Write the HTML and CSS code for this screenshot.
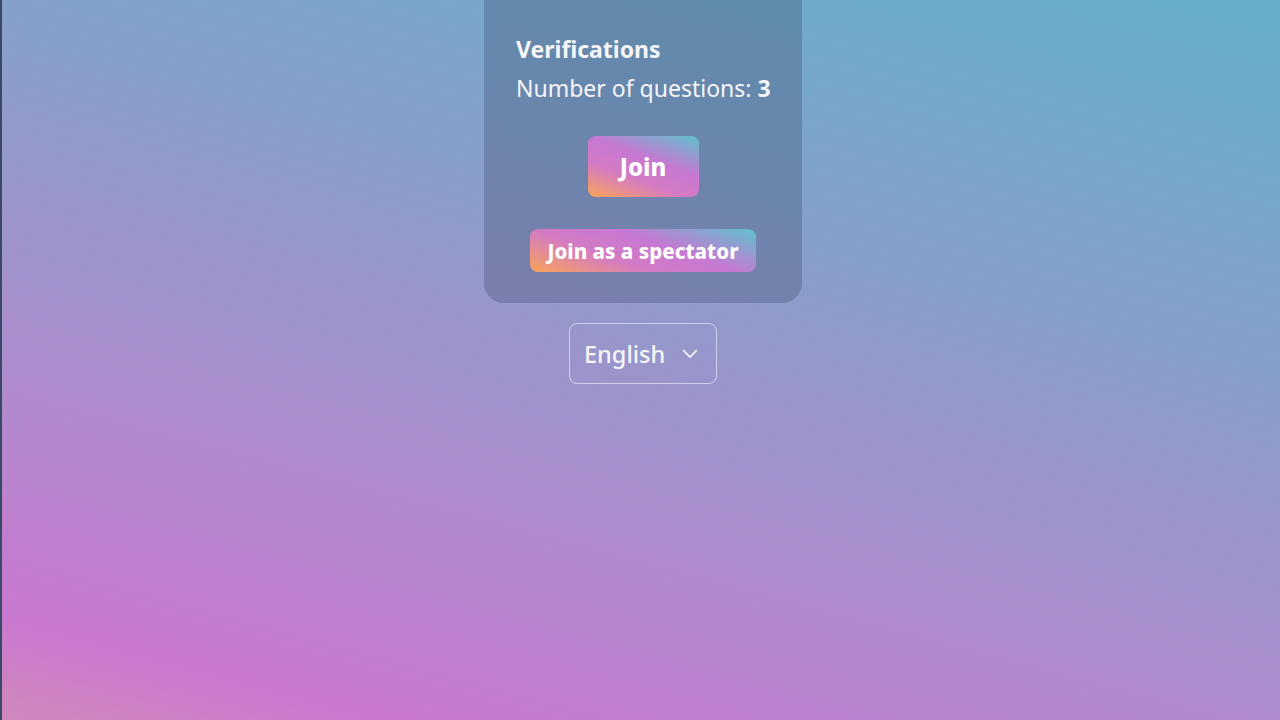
FILE: index.html
```html
<!DOCTYPE html>
<html lang="en">
<head>
<meta charset="utf-8">
<title>Quiz</title>
<link rel="stylesheet" href="styles.css">
</head>
<body>
<div class="page">
  <div class="card">
    <div class="info">
      <div class="title">Verifications</div>
      <div class="count">Number of questions: <b>3</b></div>
    </div>
    <button class="btn btn-join">Join</button>
    <button class="btn btn-spectator">Join as a spectator</button>
  </div>
  <div class="lang">
    <span>English</span>
    <svg class="chev" width="16" height="10" viewBox="0 0 16 10"><path d="M1.5 1.5 L8 8 L14.5 1.5" fill="none" stroke="#fff" stroke-width="1.6" stroke-linecap="round" stroke-linejoin="round"/></svg>
  </div>
</div>
</body>
</html>
```
FILE: styles.css
```css
html, body {
  margin: 0;
  height: 100%;
}
body {
  background: linear-gradient(195deg, #64b0c8 0%, #84a0ca 33%, #ac8ccc 66%, #c878d0 90%, #d088bc 100%);
  font-family: "Noto Sans", "Open Sans", sans-serif;
  color: #f6f6fa;
  border-left: 2px solid #3a4a66;
  box-sizing: border-box;
  overflow: hidden;
}
.page {
  display: flex;
  flex-direction: column;
  align-items: center;
  padding-left: 4px;
}
.card {
  width: 318px;
  box-sizing: border-box;
  background: rgba(36, 48, 80, 0.24);
  border-radius: 0 0 20px 20px;
  padding: 30px 32px 31px;
  display: flex;
  flex-direction: column;
  align-items: center;
}
.info {
  align-self: stretch;
  white-space: nowrap;
}
.title {
  font-size: 23px;
  font-weight: 700;
  line-height: 38px;
}
.count {
  font-size: 23px;
  font-weight: 400;
  line-height: 40px;
}
.count b {
  font-weight: 700;
}
.btn {
  border: none;
  border-radius: 8px;
  color: #fff;
  font-family: inherit;
  font-weight: 800;
  background: linear-gradient(20deg, #f8a458 0%, #d47ac4 35%, #c678d2 60%, #5cc2cc 100%);
  cursor: pointer;
  padding: 0;
}
.btn-join {
  margin-top: 28px;
  width: 111px;
  height: 61px;
  font-size: 24px;
}
.btn-spectator {
  margin-top: 32px;
  width: 226px;
  height: 43px;
  font-size: 20.5px;
}
.lang {
  margin-top: 20px;
  width: 148px;
  height: 61px;
  box-sizing: border-box;
  border: 1px solid rgba(255, 255, 255, 0.55);
  border-radius: 8px;
  display: flex;
  align-items: center;
  justify-content: space-between;
  padding: 0 18px 0 14px;
  font-size: 23.5px;
  font-weight: 500;
}
.chev {
  display: block;
}
```
